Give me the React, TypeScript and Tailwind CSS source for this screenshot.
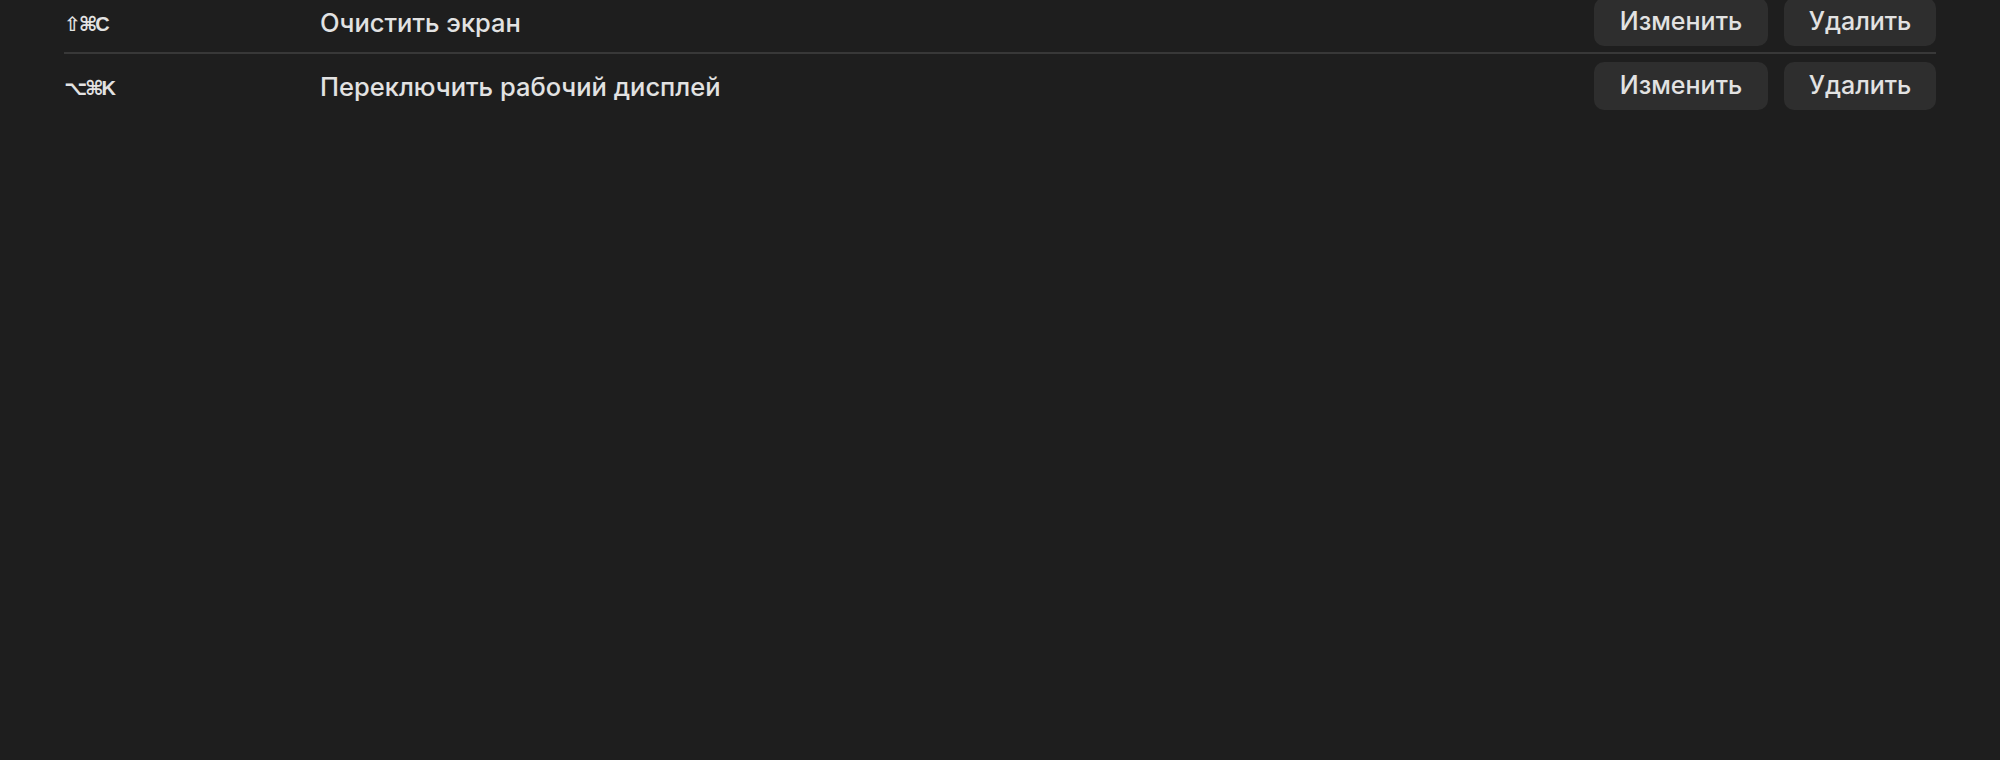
const rows = [
  { keys: '⇧⌘C', label: 'Очистить экран' },
  { keys: '⌥⌘K', label: 'Переключить рабочий дисплей' },
];

function ActionButton({ label, width }: { label: string; width: string }) {
  return (
    <button
      className={`h-[48px] ${width} rounded-[10px] bg-[#2e2e2e] text-[25px] font-medium text-[#e2e2e2] flex items-center justify-center`}
    >
      {label}
    </button>
  );
}

export default function App() {
  return (
    <div
      className="w-[2000px] h-[760px] bg-[#1e1e1e] overflow-hidden"
      style={{ fontFamily: 'Inter, "DejaVu Sans", sans-serif' }}
    >
      <div className="-mt-[10px] px-[64px]">
        {rows.map((row) => (
          <div
            key={row.keys}
            className="flex items-center pt-[8px] pb-[6px] border-b-2 border-[#383838] last:border-b-0"
          >
            <div
              className="w-[256px] pt-[3px] text-[20px] font-bold tracking-[-2px] text-[#e2e2e2]"
              style={{ fontFamily: '"Liberation Sans", "DejaVu Sans", sans-serif' }}
            >
              {row.keys}
            </div>
            <div className="flex-1 pt-[3px] text-[25.5px] font-medium text-[#e2e2e2]">{row.label}</div>
            <div className="flex gap-[16px]">
              <ActionButton label="Изменить" width="w-[174px]" />
              <ActionButton label="Удалить" width="w-[152px]" />
            </div>
          </div>
        ))}
      </div>
    </div>
  );
}
